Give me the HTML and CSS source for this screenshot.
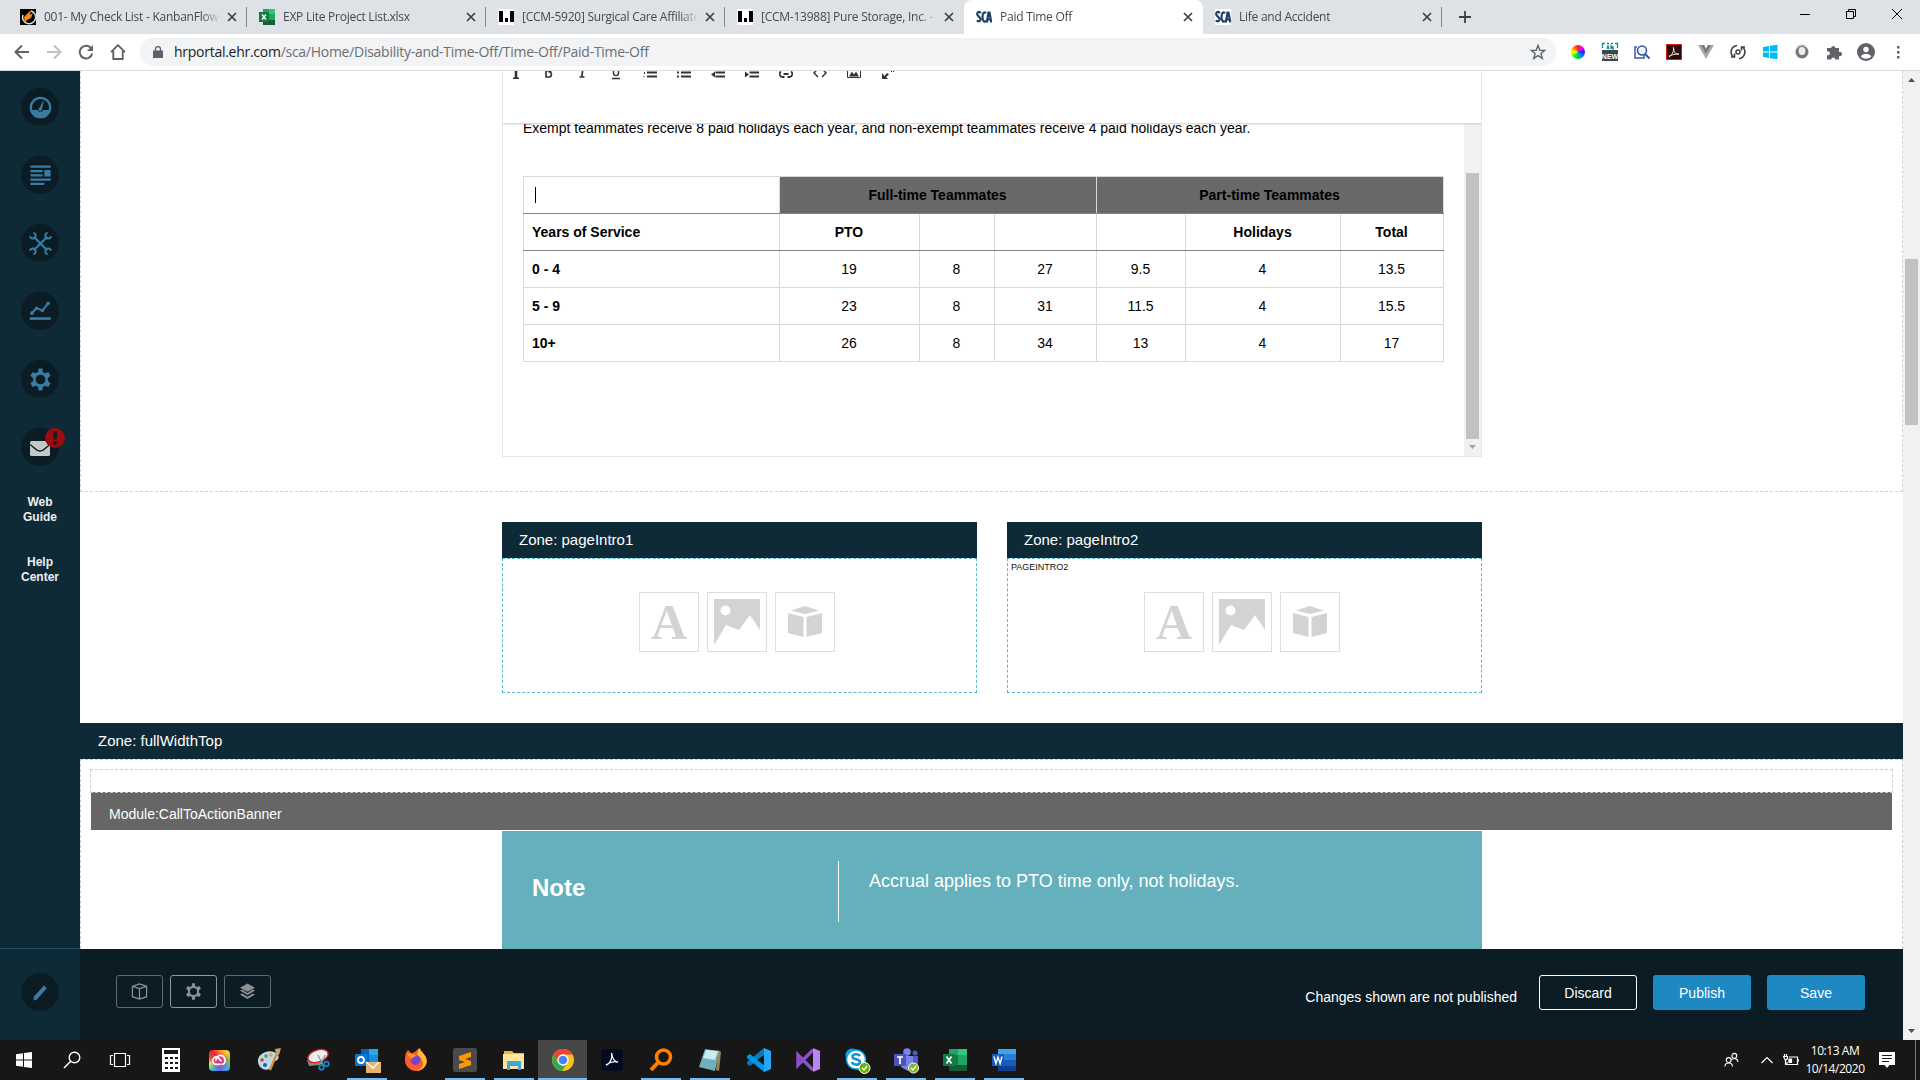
FILE: index.html
```html
<!DOCTYPE html>
<html lang="en">
<head>
<meta charset="utf-8">
<title>Paid Time Off</title>
<link rel="stylesheet" href="styles.css">
</head>
<body>
<svg width="0" height="0" class="defs">
  <symbol id="x" viewBox="0 0 10 10"><path d="M1 1l8 8M9 1l-8 8" stroke="#3c4043" stroke-width="1.7" fill="none"/></symbol>
  <symbol id="bars" viewBox="0 0 16 16"><path fill="#fff" d="M0 0h16v16H0z"/><path d="M1 2h4v11H1zM7 9h3v4H7zM12 2h4v11h-4z"/></symbol>
  <symbol id="sca" viewBox="0 0 16 16"><path fill="#fff" d="M0 0h16v16H0z"/><path d="M4.800 4.200C3.500 2 .8 3 1.300 5.500c.3 2 3.500 2.500 3.200 5-.3 2-2.500 2.500-3.500.8M9.800 4.500C9 2.500 6.500 3 6.500 8s2.500 5.500 3.300 3.500M10.800 13.500l1.700-10h1L15.300 13.500M11.500 10.500h3" fill="none" stroke="#1f4068" stroke-width="2.200"/></symbol>
  <symbol id="gear" viewBox="0 0 24 24"><path fill-rule="evenodd" d="M10 .5h4l.4 3.700 2.400 1.400 3.400-1.400 2.300 4-2.800 2.300v3l2.800 2.300-2.300 4-3.400-1.400-2.400 1.400-.4 3.700h-4l-.4-3.700-2.400-1.400-3.400 1.400-2.300-4 2.800-2.300v-3L1.500 8.200l2.300-4 3.400 1.400 2.400-1.400zM12 7a5 5 0 100 10 5 5 0 000-10z"/></symbol>
  <symbol id="pic" viewBox="0 0 46 46"><path fill-rule="evenodd" d="M0 0h46v31L36 16 25 31l-13-5L0 46zM11.500 6.500a5 5 0 100 10 5 5 0 000-10z"/></symbol>
  <symbol id="cube" viewBox="0 0 34 32"><path d="M3 4.500L17 0l14 4.500L17 8zM0 7l15.500 4v20L0 27zM34 7l-15.500 4v20L34 27z"/></symbol>
</svg>

<header class="tabs">
  <div class="tab"><svg class="fav" viewBox="0 0 16 16"><path d="M0 0h16v16H0z"/><path d="M11 2a6.500 6.500 0 11-8 4" fill="none" stroke="#ddd" stroke-width="1.500"/><path d="M11 1L4 8l1 6 2-3 4-2 2-5-3 2z" fill="#f58a12"/></svg><span class="t">001- My Check List - KanbanFlow</span><svg class="x"><use href="#x"/></svg></div>
  <div class="tab"><svg class="fav" viewBox="0 0 16 16"><path fill="#21a366" d="M4 0h12v16H4z"/><path fill="#107c41" d="M4 5h6v6H4z"/><path fill="#185c37" d="M4 11h12v5H4z"/><path fill="#33c481" d="M10 0h6v5h-6z"/><path fill="#107c41" d="M0 3h10v10H0z"/><path d="M3 5.500l4 5M7 5.500l-4 5" stroke="#fff" stroke-width="1.500"/></svg><span class="t">EXP Lite Project List.xlsx</span><svg class="x"><use href="#x"/></svg></div>
  <div class="tab"><svg class="fav"><use href="#bars"/></svg><span class="t">[CCM-5920] Surgical Care Affiliate</span><svg class="x"><use href="#x"/></svg></div>
  <div class="tab nosep"><svg class="fav"><use href="#bars"/></svg><span class="t">[CCM-13988] Pure Storage, Inc. - </span><svg class="x"><use href="#x"/></svg></div>
  <div class="tab active"><svg class="fav"><use href="#sca"/></svg><span class="t">Paid Time Off</span><svg class="x"><use href="#x"/></svg></div>
  <div class="tab"><svg class="fav"><use href="#sca"/></svg><span class="t">Life and Accident</span><svg class="x"><use href="#x"/></svg></div>
  <svg class="plus" viewBox="0 0 12 12"><path d="M6 0v12M0 6h12" stroke="#3c4043" stroke-width="1.800"/></svg>
  <div class="win">
    <svg viewBox="0 0 10 10"><path d="M0 5.500h10" stroke="#000"/></svg>
    <svg viewBox="0 0 10 10"><path d="M.5 2.500h7v7h-7zM2.500 2.500v-2h7v7h-2" fill="none" stroke="#000"/></svg>
    <svg viewBox="0 0 10 10"><path d="M0 0l10 10M10 0L0 10" stroke="#000"/></svg>
  </div>
</header>

<div class="nav">
  <div class="navbtns">
    <svg viewBox="0 0 16 16"><path d="M15 8H2M8 1.500L1.500 8 8 14.500" fill="none" stroke="#5f6368" stroke-width="2"/></svg>
    <svg viewBox="0 0 16 16"><path d="M1 8h13M8 1.500L14.500 8 8 14.500" fill="none" stroke="#bdc1c6" stroke-width="2"/></svg>
    <svg viewBox="0 0 16 16"><path d="M13.200 4.500A6.300 6.300 0 1014.200 9.500" fill="none" stroke="#5f6368" stroke-width="2"/><path d="M15 1v6H9z" fill="#5f6368"/></svg>
    <svg viewBox="0 0 16 16"><path d="M1 8.200L8 1.200l7 7M3.300 7v8h9.400V7" fill="none" stroke="#5f6368" stroke-width="1.900"/></svg>
  </div>
  <div class="omni">
    <svg class="lock" viewBox="0 0 10 12"><path d="M0 4.500h10V12H0z" fill="#5f6368"/><path d="M2.500 5V3a2.500 2.500 0 015 0v2" fill="none" stroke="#5f6368" stroke-width="1.300"/></svg>
    <span class="url"><b>hrportal.ehr.com</b>/sca/Home/Disability-and-Time-Off/Time-Off/Paid-Time-Off</span>
    <svg class="star" viewBox="0 0 16 16"><path d="M8 1.500l1.800 4.700 5 .2-3.900 3.100 1.400 4.900L8 11.600l-4.300 2.800 1.400-4.900L1.200 6.400l5-.2z" fill="none" stroke="#5f6368" stroke-width="1.400"/></svg>
  </div>
  <div class="ext">
    <i class="wheel"></i>
    <svg viewBox="0 0 16 16"><path d="M.5 4V-.5H3M5 -.5h2M9-.5h2M13-.5h2.500V4M5 5l1-3 1 3M9 5V2l2 3V2" stroke="#168a96" stroke-width="1.300" fill="none"/><path fill="#3d474c" d="M0 6h16v11H0z"/><text x="8" y="14.500" class="new">NEW</text></svg>
    <svg viewBox="0 0 16 16"><path d="M3 3H1v11h9v-3" fill="none" stroke="#3e5ea8" stroke-width="1.500"/><circle cx="8" cy="6.500" r="4.500" fill="#eef3fb" stroke="#2f559f" stroke-width="1.500"/><path d="M11 10l4.500 4.500" stroke="#2f559f" stroke-width="2"/></svg>
    <svg viewBox="0 0 16 16"><path fill="#2c0808" stroke="#d81c0c" d="M.5.500h15v15H.5z"/><path d="M3 12.500c3-1 5-5 4.500-9 .5 5 2 7 5.500 6.500-4 0-7 .5-10 2.500z" fill="none" stroke="#eee" stroke-width="1"/></svg>
    <svg viewBox="0 0 16 16"><path d="M0 1h6l2 4 2-4h6L8 15z" fill="#aaa"/><path d="M3 1h3l2 4 2-4h3L8 10z" fill="#777"/></svg>
    <svg viewBox="0 0 16 16"><path d="M7 1.500A6.500 6.500 0 003.500 13M9 14.500A6.500 6.500 0 0012.500 3M1 13h3.500V9.500M15 3h-3.500v3.500" fill="none" stroke="#3f4347" stroke-width="1.600"/><circle cx="8" cy="8" r="2" fill="none" stroke="#3f4347" stroke-width="1.500"/></svg>
    <svg viewBox="0 0 16 16"><path d="M1 3l6-1v5.500H1zM8 1.800L15.500.800v6.700H8zM1 8.500h6V14l-6-1zM8 8.500h7.500v6.800L8 14.200z" fill="#00bcf2"/></svg>
    <svg viewBox="0 0 16 16"><circle cx="8" cy="8" r="6.500" fill="#777"/><ellipse cx="8" cy="7" rx="3.400" ry="3.900" fill="#eee"/><path d="M3 4a6 6 0 018-2" stroke="#bbb" stroke-width="1.500" fill="none"/></svg>
    <svg viewBox="0 0 16 16"><path d="M1 4h4.200a2 2 0 114 0H13v4a2.200 2.200 0 110 4v3.500H9.300a2 2 0 10-4.100 0H1V11a2 2 0 100-3.600z" fill="#5f6368"/></svg>
    <svg class="ava" viewBox="0 0 18 18"><circle cx="9" cy="9" r="9" fill="#5f6368"/><circle cx="9" cy="6.500" r="2.700" fill="#fff"/><path d="M3.800 13.400c2-3.400 8.400-3.400 10.400 0-2.600 3-7.800 3-10.400 0z" fill="#fff"/></svg>
    <svg viewBox="0 0 16 16"><path d="M7 2h2.500v2.500H7zM7 7h2.500v2.500H7zM7 12h2.500v2.500H7z" fill="#5f6368"/></svg>
  </div>
</div>

<div class="page">
  <aside class="side">
    <div class="icons">
      <i class="c"><svg viewBox="0 0 24 24"><path fill-rule="evenodd" d="M12 .7a11.300 11.300 0 100 22.600A11.300 11.300 0 0012 .7zM12 3.200a8.800 8.800 0 00-8.500 11.300h5.700a3 3 0 005.600 0h5.700A8.800 8.800 0 0012 3.200z"/><path d="M14.700 5.500l.8.300-2 7.400a1.800 1.800 0 11-2.600-1z"/></svg></i>
      <i class="c"><svg viewBox="0 0 24 24"><path d="M1.500 1.500h21V4h-21zM1.500 6.200h12.700v2.400H1.500zM16 6.200h6.500v6.800H16zM1.500 10.600h12.700V13H1.500zM1.500 15h21v2.400h-21zM1.500 19.500H16V22H1.500z"/></svg></i>
      <i class="c"><svg viewBox="0 0 24 24"><path d="M5 5l14 14M19 5L5 19" stroke="#3a7ca1" stroke-width="2.200"/><path d="M4.500.9A3 3 0 111 4.500M19.500.9A3 3 0 1023 4.500M4.500 23.100A3 3 0 101 19.500M19.500 23.100A3 3 0 1123 19.500" fill="none" stroke="#3a7ca1" stroke-width="2"/></svg></i>
      <i class="c"><svg viewBox="0 0 24 24"><path d="M2.500 14l5.500-5.500 6 2.500 5.500-7" fill="none" stroke="#3a7ca1" stroke-width="2.200"/><circle cx="3" cy="13.700" r="1.900"/><circle cx="8" cy="8.500" r="1.800"/><circle cx="14" cy="11" r="1.800"/><circle cx="20" cy="3.500" r="1.900"/><path d="M.7 18h22v2.700H.7z"/></svg></i>
      <i class="c"><svg viewBox="0 0 24 24"><use href="#gear"/></svg></i>
      <i class="c"><svg class="mail" viewBox="0 0 20 15"><rect width="20" height="15" rx="1.500" fill="#c4c8cb"/><path d="M0 3.500c3 1.500 6 6.500 10 6.500s7-5 10-6.500" fill="none" stroke="#0c1c24" stroke-width="1.300"/></svg><svg class="badge" viewBox="0 0 20 20"><circle cx="10" cy="10" r="10" fill="#9c0c0e"/><path d="M8.300 3h3.600v8.500H8.300zM8.300 13.300h3.600v3.200H8.300z" fill="#1c1a20"/></svg></i>
    </div>
    <div class="lnk">Web<br>Guide</div>
    <div class="lnk">Help<br>Center</div>
    <div class="edit"><i class="c"><svg viewBox="0 0 24 24"><path d="M5 16.500L15.500 4.800l3 2.700L8 19.500l-3.300.8z"/></svg></i></div>
  </aside>

  <div class="body">
    <main class="canvas">
      <section class="top">
        <div class="editor">
          <div class="tools">
            <svg viewBox="0 0 14 15"><path d="M5.700 0h2.600v13H5.700zM4 12.500h6V14H4z"/></svg>
            <svg viewBox="0 0 14 15"><path d="M5 2h3.500a2.500 2.500 0 010 4.800 2.700 2.700 0 010 5.200H5z" fill="none" stroke="#333" stroke-width="1.700"/></svg>
            <svg viewBox="0 0 14 15"><path d="M8.200 2L6.700 12M4.500 12h5" fill="none" stroke="#333" stroke-width="1.700"/></svg>
            <svg viewBox="0 0 14 15"><path d="M4.500 2v6c0 3.500 5 3.500 5 0V2M3 13.500h8" fill="none" stroke="#333" stroke-width="1.400"/></svg>
            <svg viewBox="0 0 14 15"><path d="M4 2h10v2H4zM4 6.500h10v2H4zM4 10.500h10v2H4zM1 7h1v2H1zM.5 11h1v1h-1z"/></svg>
            <svg viewBox="0 0 14 15"><path d="M4 2h10v2H4zM4 6.500h10v2H4zM4 10.500h10v2H4zM0 6.500h2v2H0zM0 10.500h2v2H0z"/></svg>
            <svg viewBox="0 0 14 15"><path d="M4.500 6.500H14v2H4.500zM4.500 10.500H14v2H4.500zM0 9.500l4-3v6z"/></svg>
            <svg viewBox="0 0 14 15"><path d="M4.500 6.500H14v2H4.500zM4.500 10.500H14v2H4.500zM4 9.500l-4-3v6z"/></svg>
            <svg viewBox="0 0 14 15"><path d="M5.500 12H3.800A3 3 0 012 6.500M8.500 12h1.700A3 3 0 0012 6.500M4.500 9h5" fill="none" stroke="#333" stroke-width="1.800"/></svg>
            <svg viewBox="0 0 14 15"><path d="M4.500 4L1 8l4 4M9.500 4L13 8l-4 4" fill="none" stroke="#333" stroke-width="1.500"/></svg>
            <svg viewBox="0 0 14 15"><path d="M.5 1.500h13v11H.5z" fill="none" stroke="#333"/><path d="M2 11.500l3-5 2 3 2-3 3 5z"/></svg>
            <svg viewBox="0 0 14 15"><path d="M1 8v6h6L5 12l3-2.500L6 8l-2.500 3zM10 6h1v1h-1zM12 5h1v2h-1z"/></svg>
          </div>
          <div class="doc">
            <div class="text">
              <p>Exempt teammates receive 8 paid holidays each year, and non-exempt teammates receive 4 paid holidays each year.</p>
              <table>
                <colgroup><col class="w0"><col class="w1"><col class="w2"><col class="w3"><col class="w4"><col class="w5"><col class="w6"></colgroup>
                <tr class="dk"><th><span class="caret"></span></th><th colspan="3" class="g">Full-time Teammates</th><th colspan="3" class="g">Part-time Teammates</th></tr>
                <tr class="dk"><th>Years of Service</th><th>PTO</th><th></th><th></th><th></th><th>Holidays</th><th>Total</th></tr>
                <tr><th>0 - 4</th><td>19</td><td>8</td><td>27</td><td>9.5</td><td>4</td><td>13.5</td></tr>
                <tr><th>5 - 9</th><td>23</td><td>8</td><td>31</td><td>11.5</td><td>4</td><td>15.5</td></tr>
                <tr><th>10+</th><td>26</td><td>8</td><td>34</td><td>13</td><td>4</td><td>17</td></tr>
              </table>
            </div>
            <div class="dsb"><i></i><svg viewBox="0 0 7 4"><path d="M0 0h7L3.500 4z" fill="#a3a3a3"/></svg></div>
          </div>
        </div>
      </section>

      <section class="zones">
        <div class="zone"><h3>Zone: pageIntro1</h3><div class="drop"><small></small><div class="opts"><i>A</i><i><svg class="p"><use href="#pic"/></svg></i><i><svg class="q"><use href="#cube"/></svg></i></div></div></div>
        <div class="zone"><h3>Zone: pageIntro2</h3><div class="drop"><small>PAGEINTRO2</small><div class="opts"><i>A</i><i><svg class="p"><use href="#pic"/></svg></i><i><svg class="q"><use href="#cube"/></svg></i></div></div></div>
      </section>

      <h3 class="full">Zone: fullWidthTop</h3>
      <section class="fullbox">
        <div class="strip"></div>
        <div class="module">Module:CallToActionBanner</div>
        <div class="banner"><h2>Note</h2><p>Accrual applies to PTO time only, not holidays.</p></div>
      </section>
    </main>
    <footer class="bar">
      <button class="ib"><svg viewBox="0 0 18 18"><path d="M1.500 3.500L9 1l7.500 2.500v11L9 17l-7.500-2.500zM1.500 3.500L9 6l7.500-2.500M9 6v11" fill="none" stroke="#8b9195" stroke-width="1.300"/></svg></button>
      <button class="ib on"><svg viewBox="0 0 24 24"><use href="#gear" fill="#8b9195"/></svg></button>
      <button class="ib"><svg viewBox="0 0 18 18"><path d="M9 .5L17 5 9 9.300 1 5zM1 8l2.500-1L9 10.500 14.500 7 17 8l-8 4.800zM1 12.200l2.500-1L9 14.500l5.500-3.300 2.500 1L9 17z" fill="#8b9195"/></svg></button>
      <span class="msg">Changes shown are not published</span>
      <button class="b out">Discard</button><button class="b">Publish</button><button class="b">Save</button>
    </footer>
  </div>

  <div class="sb"><svg viewBox="0 0 7 4"><path d="M0 4h7L3.500 0z"/></svg><i></i><svg viewBox="0 0 7 4"><path d="M0 0h7L3.500 4z"/></svg></div>
</div>

<div class="task">
  <div class="ti sys"><svg viewBox="0 0 24 24"><path fill="#fff" d="M4 6.200l7-1v6.300H4zM12 5l8-1v7.500h-8zM4 12.500h7v6.300l-7-1zM12 12.500h8V20l-8-1z"/></svg></div>
  <div class="ti sys"><svg viewBox="0 0 24 24"><circle cx="14.500" cy="9.500" r="5.300" fill="none" stroke="#fff" stroke-width="1.400"/><path d="M10.700 13.300L4 20" stroke="#fff" stroke-width="1.500"/></svg></div>
  <div class="ti sys"><svg viewBox="0 0 24 24"><path d="M6.500 5.500h11v13h-11zM5 7.500H2.500v9H5M19 7.500h2.500v9H19" fill="none" stroke="#fff" stroke-width="1.200"/></svg></div>
  <div class="ti"><svg viewBox="0 0 24 24"><path fill="#fff" d="M3 0h18v24H3z"/><path fill="#171717" d="M5 2h14v4H5zM6 9h3v2H6zM11 9h3v2h-3zM16 9h3v2h-3zM6 14h3v2H6zM11 14h3v2h-3zM16 14h3v2h-3zM6 19h3v2H6zM11 19h3v2h-3zM16 19h3v2h-3z"/></svg></div>
  <div class="ti"><div class="cc"><svg viewBox="0 0 24 24"><path d="M13.500 16.500H8.500a4.300 4.300 0 010-8.600c3.500 0 3.500 4.600 6 4.600M8 12a5 5 0 0110-1.500c1.500 3-.5 6-3.500 6" fill="none" stroke="#fff" stroke-width="1.900"/></svg></div></div>
  <div class="ti"><svg viewBox="0 0 24 24"><path d="M1 14C0 7 9 1 17 4c6 2 6 8 1 9-4 1-1 3-3 6-4 5-13 3-14-5z" fill="#b9d9ec"/><circle cx="9" cy="8" r="1.800" fill="#51a948"/><circle cx="5" cy="12" r="1.800" fill="#d84030"/><circle cx="14" cy="7" r="1.800" fill="#e5a42f"/><circle cx="8" cy="17" r="2" fill="#345c9c"/><path d="M21 3l-8 19" stroke="#e08a28" stroke-width="2.300"/><path d="M18 1l6-1-2 7-3-1z" fill="#c5a078"/></svg></div>
  <div class="ti"><svg viewBox="0 0 24 24"><path d="M1 12l2 6 11-1 7-9z" fill="#888"/><ellipse cx="12" cy="8" rx="10.500" ry="6" transform="rotate(-18 12 8)" fill="#e9eef0" stroke="#d71920" stroke-width="1.300"/><path d="M12 7l5 10M19 7l-4 9" stroke="#899" stroke-width="1.300"/><circle cx="15.500" cy="19.500" r="2.300" fill="none" stroke="#1887c8" stroke-width="1.700"/><circle cx="20.500" cy="16" r="2.300" fill="none" stroke="#1887c8" stroke-width="1.700"/></svg></div>
  <div class="ti run"><svg viewBox="0 0 24 24"><path fill="#1490df" d="M6 1h17v17H6z"/><path fill="#28a8ea" d="M14 1h9v6h-9z"/><path fill="#0364b8" d="M6 1h8v17H6z"/><path fill="#0078d4" d="M0 6h12v12H0z"/><circle cx="6" cy="12" r="3" fill="none" stroke="#fff" stroke-width="1.800"/><path fill="#e8b36c" d="M11 14h15v11H11z"/><path d="M11 14l7 6 6-6" fill="none" stroke="#fff" stroke-width="1.300"/></svg></div>
  <div class="ti"><svg viewBox="0 0 24 24"><path fill="#ff5b2e" d="M1 11c0-4 1-7 3-9l3 3c3 1 5-3 9-5 1 4 7 7 7 13a11 11 0 01-22-2z"/><path fill="#ffc02e" d="M15 0c2 5 8 7 7.500 14-.5 5-5 9-10.500 9 11-3 7-13 1-16z"/><circle cx="11.500" cy="12" r="5" fill="#7542d3"/><path fill="#ff9827" d="M3 6c3-1 7 0 10 2-4 0-4 3-6 3z"/></svg></div>
  <div class="ti run"><svg viewBox="0 0 24 24"><rect width="24" height="24" rx="2" fill="#4a4a4a"/><path fill="#ff9800" d="M6 8l12-4v5l-6 2 6 2v4L6 21v-5l6-2-6-2z"/></svg></div>
  <div class="ti run"><svg viewBox="0 0 24 24"><path fill="#e8b83a" d="M2 3h8l2 2h10v3H2z"/><path fill="#ffe49a" d="M1 6h21v15H1z"/><path fill="#36a9e0" d="M5 13h14v9h-3v-4H8v4H5z"/></svg></div>
  <div class="ti run cur"><svg viewBox="0 0 24 24"><circle cx="12" cy="12" r="11" fill="#fbc116"/><path fill="#ea4335" d="M2.500 6.500A11 11 0 0121.500 6.500H12a5.500 5.500 0 00-5 8z"/><path fill="#34a853" d="M2.500 6.500A11 11 0 0011 23l4.800-7.500A5.500 5.500 0 017 14.500z"/><circle cx="12" cy="12" r="5" fill="#4285f4" stroke="#fff" stroke-width="1.300"/></svg></div>
  <div class="ti"><svg viewBox="0 0 24 24"><rect x="1" y="1" width="22" height="22" rx="4" fill="#020b20"/><path d="M6 17c4-1 7-7 5.500-12 1 6 3 9 6.500 9-4-1-8 0-12 3z" fill="none" stroke="#fff" stroke-width="1.300"/></svg></div>
  <div class="ti run"><svg viewBox="0 0 24 24"><circle cx="14.500" cy="9" r="7" fill="none" stroke="#ff7f00" stroke-width="3.500"/><path d="M9.500 14L2 22" stroke="#ff7f00" stroke-width="4"/></svg></div>
  <div class="ti run"><svg viewBox="0 0 24 24"><path fill="#a58253" d="M20 2l3 2-2 19-3-1z"/><path fill="#6fb0ba" d="M7 1l14 2-4 20L1 19z"/><path fill="#c9ecef" d="M8 2l12 1-3 9-12-2z"/></svg></div>
  <div class="ti"><svg viewBox="0 0 24 24"><path fill="#0879bd" d="M17 0l1 6L3 18l-3-2v-2z"/><path fill="#0098e0" d="M0 8l3-2 15 12-1 6L0 10z"/><path fill="#25a8f4" d="M17 0l7 3v18l-7 3z"/></svg></div>
  <div class="ti"><svg viewBox="0 0 24 24"><path d="M17 2L2 17V7l15 15" fill="none" stroke="#8c50c8" stroke-width="3.500"/><path fill="#b985f5" d="M17 0l7 3v18l-7 3z"/></svg></div>
  <div class="ti run"><svg viewBox="0 0 24 24"><circle cx="7" cy="7" r="6.500" fill="#0ba6e8"/><circle cx="15" cy="16" r="6.500" fill="#0ba6e8"/><circle cx="11" cy="11.500" r="9.500" fill="#fff" stroke="#0ba6e8" stroke-width="1.500"/><path d="M15 8c-2-3-8-2-7.500 1 .5 3 7.500 1.500 7.500 5s-7 3.500-8 0" fill="none" stroke="#0a94d6" stroke-width="2.500"/><circle cx="19.500" cy="20" r="5.500" fill="#6bb700" stroke="#fff"/><path d="M17 20l2 2 3-4" fill="none" stroke="#fff" stroke-width="1.300"/></svg></div>
  <div class="ti run"><svg viewBox="0 0 24 24"><circle cx="13" cy="4" r="3.800" fill="#7b83eb"/><circle cx="21" cy="5" r="2.500" fill="#5059c9"/><path fill="#5059c9" d="M15 8h9v9l-5 3z"/><path fill="#7b83eb" d="M6 8h13v10l-5 5-7-4z"/><path fill="#4b53bc" d="M0 6h12v12H0z"/><path d="M3 9h6M6 9v7" stroke="#fff" stroke-width="1.700"/><circle cx="19.500" cy="20" r="5" fill="#7fba20" stroke="#fff"/><path d="M17 20l2 2 3-4" fill="none" stroke="#fff" stroke-width="1.300"/></svg></div>
  <div class="ti run"><svg viewBox="0 0 24 24"><path fill="#21a366" d="M6 1h18v22H6z"/><path fill="#33c481" d="M15 1h9v6h-9z"/><path fill="#107c41" d="M6 7h9v10H6z"/><path fill="#185c37" d="M6 17h18v6H6z"/><path fill="#107c41" d="M0 6h12v12H0z"/><path d="M3.500 8.500l5 7M8.500 8.500l-5 7" stroke="#fff" stroke-width="1.700"/></svg></div>
  <div class="ti run"><svg viewBox="0 0 24 24"><path fill="#2b7cd3" d="M6 1h18v22H6z"/><path fill="#41a5ee" d="M6 1h18v5H6z"/><path fill="#185abd" d="M6 12h18v6H6z"/><path fill="#103f91" d="M6 18h18v5H6z"/><path fill="#185abd" d="M0 6h12v12H0z"/><path d="M2 8.500l1.900 7L6 9l2.100 6.500 1.900-7" fill="none" stroke="#fff" stroke-width="1.400"/></svg></div>
  <div class="tray">
    <svg class="pe" viewBox="0 0 16 16"><circle cx="5" cy="8" r="2.600"/><circle cx="11" cy="3.500" r="2.600"/><path d="M1 15c0-5 8-5 8 0M8 8c2-2.500 6.500-2 7 2"/></svg>
    <svg class="ch" viewBox="0 0 12 12"><path d="M.5 9L6 3.500 11.500 9"/></svg>
    <svg class="ba" viewBox="0 0 16 12"><path d="M6 3h8.500v7.500H4V8M15.500 5.500v2M1.500 0v2M3.500 0v2M.5 2.500h4v2l-2 2zM2.500 7v3.500H4"/><path d="M6 5h2.500v3.500H6z" fill="#fff"/></svg>
    <div class="clock">10:13 AM<br>10/14/2020</div>
    <svg class="no" viewBox="0 0 16 16"><path d="M0 0h16v13h-5.500L8 16l-2.500-3H0z" fill="#fff" stroke="none"/><path d="M3 3.500h10M3 6.500h10M3 9.500h7" stroke="#171717"/></svg>
    <i class="peek"></i>
  </div>
</div>
</body>
</html>
```
FILE: styles.css
```css
* { box-sizing: border-box; }
body { margin: 0; width: 1920px; height: 1080px; overflow: hidden; display: grid; grid-template-rows: 34px 37px 969px 40px; font-family: "Liberation Sans", Arial, sans-serif; font-size: 14px; color: #000; background: #fff; }
h2, h3, p { margin: 0; font-weight: normal; }
i { font-style: normal; }
svg { display: block; flex: none; }
.defs { position: absolute; }

/* Browser chrome */
.tabs { background: #dee1e6; display: flex; padding-left: 8px; font: 12px/16px "Open Sans", sans-serif; letter-spacing: -.25px; color: #45494d; }
.tab { width: 239px; height: 34px; padding: 0 10px 0 12px; display: flex; align-items: center; gap: 8px; background: linear-gradient(#85898e, #85898e) right 7px / 1px 20px no-repeat; }
.tab.nosep { background: none; }
.tab.active { background: #fff; border-radius: 8px 8px 0 0; }
.fav { width: 16px; height: 16px; }
.t { flex: 1; min-width: 0; overflow: hidden; white-space: nowrap; -webkit-mask-image: linear-gradient(90deg, #000 158px, transparent 176px); }
.x { width: 10px; height: 10px; }
.plus { width: 12px; height: 12px; margin: 11px 0 0 17px; }
.win { margin: 9px 18px 0 auto; display: flex; gap: 36px; }
.win svg { width: 10px; height: 10px; }
.nav { display: flex; align-items: center; border-bottom: 1px solid #d7d9dc; background: #fff; padding: 0 14px; }
.navbtns { display: flex; gap: 16px; }
.navbtns svg { width: 16px; height: 16px; }
.omni { margin-left: 14px; width: 1416px; height: 28px; border-radius: 14px; background: #f1f3f4; display: flex; align-items: center; padding: 0 10px 0 13px; }
.lock { width: 10px; height: 12px; }
.url { flex: 1; margin-left: 11px; font: 14px/20px "Open Sans", sans-serif; letter-spacing: -.27px; color: #6b6f73; }
.url b { font-weight: normal; color: #202124; }
.star { width: 16px; height: 16px; }
.ext { display: flex; align-items: center; gap: 16px; margin-left: 14px; }
.ext svg { width: 16px; height: 16px; overflow: visible; }
.ext .ava { width: 18px; height: 18px; margin: 0 -1px; }
.wheel { width: 14px; height: 14px; margin: 0 1px; border-radius: 50%; background: conic-gradient(#e22, #f0f, #22f, #08f, #0c4, #2f2, #ff0, #f80, #e22); }
.new { font: bold 7px "Liberation Sans", sans-serif; fill: #fff; text-anchor: middle; }

/* Portal */
.page { display: flex; overflow: hidden; }
.side { width: 80px; background: #0e2a36; display: flex; flex-direction: column; padding-top: 17px; }
.icons { display: flex; flex-direction: column; align-items: center; gap: 30px; margin-bottom: 29px; }
.c { width: 38px; height: 38px; border-radius: 50%; background: #0c1c24; display: grid; place-items: center; position: relative; }
.c svg { width: 23px; height: 23px; fill: #3a7ca1; }
.c .mail { width: 20px; height: 15px; margin-top: 2px; }
.c .badge { position: absolute; width: 20px; height: 20px; left: 24px; top: 0; }
.lnk { color: #eceff0; font: bold 12px/15px "Liberation Sans", sans-serif; text-align: center; margin-bottom: 30px; }
.edit { margin-top: auto; height: 92px; border-top: 1px solid #1b4a66; display: flex; justify-content: center; padding-top: 24px; }
.body { width: 1823px; display: flex; flex-direction: column; }
.canvas { height: 878px; overflow: hidden; }
.top { height: 421px; border: 1px dashed #d3d3d3; border-top: 0; padding-left: 421px; }
.editor { width: 980px; height: 386px; display: flex; flex-direction: column; border: 1px solid #e8e8e8; border-top: 0; }
.tools { height: 53px; flex: none; overflow: hidden; background: #fff; border-bottom: 1px solid #d9d9d9; box-shadow: 0 1px 1px rgba(0,0,0,.06); display: flex; gap: 20px; padding-left: 6px; z-index: 1; }
.tools svg { width: 14px; height: 15px; margin-top: -6px; fill: #333; }
.tools svg:first-child { margin-right: -2px; }
.doc { flex: 1; display: flex; justify-content: space-between; min-height: 0; }
.text { width: 941px; padding-left: 20px; }
.text p { margin-top: -4px; height: 56px; line-height: 16px; white-space: nowrap; letter-spacing: -.01px; }
table { border-collapse: collapse; table-layout: fixed; width: 921px; }
td, th { height: 37px; padding: 0 8px 0 7px; border: 1px solid #d9d9d9; text-align: center; font-size: 14px; }
.dk > * { border-bottom-color: #858585; }
tr > th:first-child { text-align: left; padding-left: 8px; }
.g { background: #696969; }
.w0 { width: 256px; } .w1 { width: 140px; } .w2 { width: 75px; } .w3 { width: 102px; } .w4 { width: 89px; } .w5 { width: 155px; } .w6 { width: 103px; }
.caret { display: block; width: 1px; height: 16px; background: #000; margin-left: 3px; }
.dsb { width: 17px; background: #f1f1f1; display: flex; flex-direction: column; align-items: center; padding-top: 49px; }
.dsb i { width: 13px; height: 266px; background: #c1c1c1; }
.dsb svg { width: 7px; height: 4px; margin-top: 6px; }
.zones { display: flex; gap: 30px; padding: 30px 0 0 422px; height: 231px; }
.zone { width: 475px; }
h3 { height: 36px; background: #0e2a36; color: #fff; font-size: 15px; line-height: 36px; padding-left: 17px; }
.drop { height: 135px; border: 1px dashed #56b9d4; }
.drop small { display: block; height: 33px; padding: 2px 0 0 3px; font-size: 9px; line-height: 12px; color: #111; }
.opts { display: flex; justify-content: center; gap: 8px; margin-right: 5px; }
.opts i { width: 60px; height: 60px; border: 1px solid #dedede; display: grid; place-items: center; font: bold 50px/58px "Liberation Serif", serif; color: #d3d3d3; fill: #d3d3d3; }
.p { width: 46px; height: 46px; }
.q { width: 34px; height: 32px; }
.full { margin-top: 0; }
.fullbox { border: 1px dashed #ccc; border-bottom: 0; height: 190px; padding: 9px 9px 0; }
.strip { height: 24px; border: 1px dashed #ccc; position: relative; }
.module { margin: -1px 1px 0; height: 38px; background: #666; color: #fff; line-height: 44px; padding-left: 18px; }
h3.full { padding-left: 18px; }
.banner { margin: 1px 0 0 412px; width: 980px; height: 130px; background: #64b0bd; color: #fff; display: flex; padding: 30px; }
.banner h2 { width: 307px; height: 61px; border-right: 1px solid #fff; font: bold 24px/54px "Liberation Sans", sans-serif; }
.banner p { margin-left: 30px; font-size: 18px; line-height: 40px; }
.bar { height: 91px; background: #0c1c24; display: flex; align-items: flex-start; padding: 26px 38px 0 36px; color: #fff; }
button { font: 14px "Liberation Sans", sans-serif; color: #fff; padding: 0; border-radius: 3px; }
.ib { width: 47px; height: 33px; background: none; border: 1px solid #62696d; margin-right: 7px; display: grid; place-items: center; }
.ib.on { border-color: #92979a; }
.ib svg { width: 17px; height: 17px; }
.msg { margin-left: auto; line-height: 45px; margin-right: 6px; }
.b { width: 98px; height: 35px; background: #1d88c2; border: 0; margin-left: 16px; }
.b.out { background: none; border: 1px solid #fff; }
.sb { width: 17px; background: #f1f1f1; display: flex; flex-direction: column; align-items: center; padding: 7px 0; }
.sb i { width: 13px; height: 166px; background: #c1c1c1; margin: 177px 0 auto; }
.sb svg { width: 7px; height: 4px; fill: #505050; }

/* Taskbar */
.task { background: #171717; display: flex; }
.ti { width: 49px; height: 40px; display: grid; place-items: center; }
.ti.sys { width: 48px; }
.ti:nth-child(3) { margin-right: 2px; }
.ti svg { width: 24px; height: 24px; overflow: visible; }
.cc { width: 21px; height: 21px; border-radius: 4px; display: grid; place-items: center; background: radial-gradient(circle, #e0358a 20%, transparent 65%), conic-gradient(from 0deg, #ff8a1e, #f5d02a, #7cc843 25%, #3aa8f0 38%, #5b6df0 50%, #35b8d8 60%, #e8e337 70%, #f04040 80%, #e8253a 90%, #ff8a1e); }
.ti .cc svg { width: 21px; height: 21px; }
.run { background: linear-gradient(#76b9ed, #76b9ed) center bottom / 40px 2px no-repeat; }
.cur { background: linear-gradient(#76b9ed, #76b9ed) center bottom / 100% 2px no-repeat #474747; }
.tray { margin-left: auto; display: flex; align-items: center; }
.tray svg { fill: none; stroke: #fff; stroke-width: 1.2; }
.pe { width: 15px; height: 16px; }
.ch { width: 12px; height: 12px; margin-left: 22px; }
.ba { width: 16px; height: 12px; margin-left: 10px; }
.clock { width: 60px; margin: 0 14px 0 6px; font: 12px/18px "Open Sans", sans-serif; letter-spacing: -.45px; color: #fff; text-align: center; white-space: nowrap; }
.no { width: 16px; height: 16px; }
.peek { width: 1px; height: 40px; background: #777; margin: 0 4px 0 20px; }
```
